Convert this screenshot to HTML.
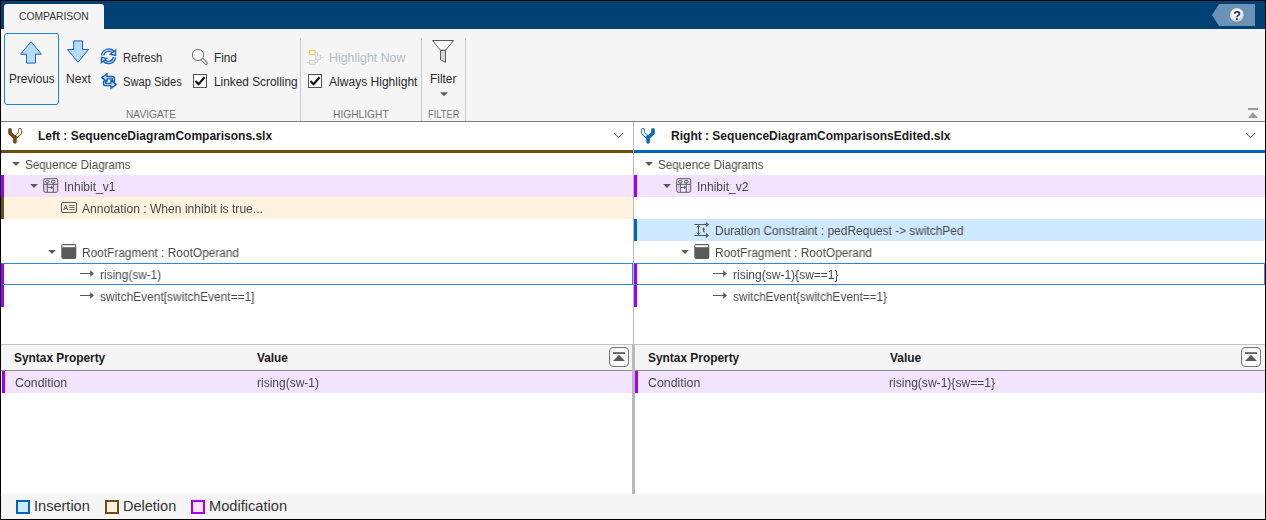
<!DOCTYPE html>
<html><head><meta charset="utf-8">
<style>
html,body{margin:0;padding:0}
body{width:1266px;height:520px;position:relative;overflow:hidden;background:#fff;font-family:"Liberation Sans",sans-serif}
.a{position:absolute}
.t{position:absolute;white-space:pre;transform-origin:0 0}
svg{position:absolute;overflow:visible}
</style></head><body>
<!-- blue title bar -->
<div class="a" style="left:0;top:0;width:1266px;height:29px;background:#004174"></div>
<!-- toolstrip body -->
<div class="a" style="left:0;top:29px;width:1266px;height:92px;background:#f5f5f5"></div>
<div class="a" style="left:0;top:121px;width:1266px;height:1px;background:#7d7d7d"></div>
<!-- tab -->
<div class="a" style="left:4px;top:4px;width:100px;height:26px;background:#f5f5f5;border-radius:3px 3px 0 0"></div>
<!-- help -->
<svg style="left:1212px;top:4px" width="44" height="23" viewBox="0 0 44 23">
 <defs><radialGradient id="hg" cx="0.4" cy="0.3" r="0.75"><stop offset="0" stop-color="#ffffff"/><stop offset="0.6" stop-color="#e9edf1"/><stop offset="1" stop-color="#aab4c0"/></radialGradient></defs>
 <polygon points="0,11 7,0 43,0 43,22 7,22" fill="#6a93b6"/>
 <circle cx="24.9" cy="11.1" r="7.3" fill="url(#hg)" stroke="#5b7894" stroke-width="0.6"/>
 <text x="25" y="15.5" font-family="Liberation Sans, sans-serif" font-weight="700" font-size="12.5" fill="#1d2b45" text-anchor="middle">?</text>
</svg>
<!-- Previous button -->
<div class="a" style="left:4px;top:33px;width:53px;height:70px;border:1px solid #2384dd;border-radius:3px;background:#f5f5f5"></div>
<svg style="left:0;top:0" width="1266" height="130" viewBox="0 0 1266 130">
 <!-- up arrow -->
 <polygon points="31,41.6 41.4,54.2 35.5,54.2 35.5,63.1 26.5,63.1 26.5,54.2 20.6,54.2" fill="#b5dbff" stroke="#1f66bd" stroke-width="1" stroke-linejoin="miter"/>
 <!-- down arrow -->
 <polygon points="73.7,40.9 82.5,40.9 82.5,49.5 88.5,49.5 78,62.3 67.5,49.5 73.7,49.5" fill="#b5dbff" stroke="#1f66bd" stroke-width="1"/>
 <!-- refresh icon -->
 <g fill="none" stroke-linecap="butt">
  <path d="M102.6,55.4 A6,6 0 0 1 113.4,52.6" stroke="#1960bb" stroke-width="3.5"/>
  <path d="M102.6,55.4 A6,6 0 0 1 113.4,52.6" stroke="#b5dbff" stroke-width="1.2"/>
  <path d="M114.4,57.2 A6,6 0 0 1 103.6,60" stroke="#1960bb" stroke-width="3.5"/>
  <path d="M114.4,57.2 A6,6 0 0 1 103.6,60" stroke="#b5dbff" stroke-width="1.2"/>
 </g>
 <polygon points="115.6,50 115.6,55.4 110.2,54.3" fill="#b5dbff" stroke="#1960bb" stroke-width="1.25"/>
 <polygon points="101.4,62.7 101.4,57.3 106.8,58.4" fill="#b5dbff" stroke="#1960bb" stroke-width="1.25"/>
 <!-- swap icon -->
 <path d="M101.7,77.6 L107,73.7 V76.5 H112.6 Q114.5,76.5 114.5,78.4 V81.2 H112.3 V78.9 H107 V81.6 Z" fill="#b5dbff" stroke="#175db6" stroke-width="1.35" stroke-linejoin="round"/>
 <path d="M116.3,84.4 L110.9,80.4 V83.3 H105.7 V81.1 H103.5 V83.7 Q103.5,85.6 105.4,85.6 H110.9 V88.4 Z" fill="#b5dbff" stroke="#175db6" stroke-width="1.35" stroke-linejoin="round"/>
 <!-- find icon -->
 <line x1="201.6" y1="58.8" x2="206.1" y2="63.3" stroke="#6e6e6e" stroke-width="3.4" stroke-linecap="round"/>
 <line x1="202.2" y1="59.4" x2="206" y2="63.2" stroke="#f4f4f4" stroke-width="1.5" stroke-linecap="round"/>
 <circle cx="198" cy="55" r="5.6" fill="#fbfbfb" stroke="#6e6e6e" stroke-width="1"/>
 <!-- checkboxes -->
 <rect x="193.5" y="74.5" width="13" height="13" fill="#fff" stroke="#555" stroke-width="1"/>
 <polyline points="195.4,81 198.6,84.3 204.6,77.2" fill="none" stroke="#111" stroke-width="2.1"/>
 <rect x="308.5" y="74.5" width="13" height="13" fill="#fff" stroke="#555" stroke-width="1"/>
 <polyline points="310.4,81 313.6,84.3 319.6,77.2" fill="none" stroke="#111" stroke-width="2.1"/>
 <!-- separators -->
 <rect x="300" y="38" width="1" height="83" fill="#c9c9c9"/>
 <rect x="421" y="38" width="1" height="83" fill="#c9c9c9"/>
 <rect x="465" y="38" width="1" height="83" fill="#c9c9c9"/>
 <!-- highlight now (disabled) -->
 <g fill="none" stroke="#d3d7d7" stroke-width="1">
  <path d="M307,52.5 H309 M315,52.5 H317.5 V62.5 H315 M307,62.5 H309 M317.5,57.5 H316 M321,57.5 H323"/>
  <rect x="315.5" y="55.5" width="5" height="4" fill="#e9ebeb"/>
  <rect x="309.5" y="60.5" width="5.5" height="4" fill="#e9ebeb"/>
 </g>
 <rect x="308.6" y="49.6" width="7.2" height="5.8" fill="#fbefc0" stroke="#fbefc0" stroke-width="1.2" opacity="0.7"/>
 <rect x="309.5" y="50.5" width="5.5" height="4" fill="#fdf5cf" stroke="#dfcc86" stroke-width="1"/>
 <!-- filter icon -->
 <polygon points="432.5,40.5 453.5,40.5 445.5,50.3 440.5,50.3" fill="#fbfbfb" stroke="#5a5a5a" stroke-width="1" stroke-linejoin="round"/>
 <polygon points="440.5,50.3 445.5,50.3 445.5,62.4 440.5,59.6" fill="#d9d9d9" stroke="#5a5a5a" stroke-width="1" stroke-linejoin="round"/>
 <polygon points="440.2,92.3 448,92.3 444.1,96.2" fill="#5a5a5a"/>
 <!-- collapse toolstrip icon -->
 <rect x="1248" y="108" width="10" height="2" fill="#9a9a9a"/>
 <polygon points="1248,118 1258,118 1253,112.2" fill="#9a9a9a"/>
</svg>

<!-- ===== panes ===== -->
<!-- left header underline / right header underline -->
<div class="a" style="left:1px;top:150px;width:632px;height:3px;background:#6b4e16"></div>
<div class="a" style="left:634px;top:150px;width:631px;height:3px;background:#0066b8"></div>
<!-- rows left -->
<div class="a" style="left:1px;top:175px;width:632px;height:22px;background:#f3e3ff"></div>
<div class="a" style="left:1px;top:197px;width:632px;height:22px;background:#fff3e0"></div>
<div class="a" style="left:1px;top:175px;width:3px;height:22px;background:#a200f2"></div>
<div class="a" style="left:1px;top:197px;width:3px;height:22px;background:#6b4e16"></div>
<div class="a" style="left:1px;top:263px;width:3px;height:44px;background:#a200f2"></div>
<div class="a" style="left:1px;top:263px;width:631px;height:20px;border:1px solid #2b88de;border-left:none"></div>
<!-- rows right -->
<div class="a" style="left:634px;top:175px;width:631px;height:22px;background:#f3e3ff"></div>
<div class="a" style="left:634px;top:219px;width:631px;height:22px;background:#cde8ff"></div>
<div class="a" style="left:634px;top:175px;width:3px;height:22px;background:#a200f2"></div>
<div class="a" style="left:634px;top:219px;width:3px;height:22px;background:#0066b8"></div>
<div class="a" style="left:634px;top:263px;width:3px;height:44px;background:#a200f2"></div>
<div class="a" style="left:634px;top:263px;width:630px;height:20px;border:1px solid #2b88de;border-left:none"></div>
<!-- bottom tables -->
<div class="a" style="left:1px;top:344px;width:1264px;height:27px;background:#f5f5f5"></div>
<div class="a" style="left:1px;top:344px;width:1264px;height:1px;background:#c4c4c4"></div>
<div class="a" style="left:1px;top:370px;width:1264px;height:1px;background:#8a8a8a"></div>
<div class="a" style="left:1px;top:371px;width:1264px;height:22px;background:#f3e3ff"></div>
<div class="a" style="left:2px;top:371px;width:3px;height:22px;background:#a200f2"></div>
<div class="a" style="left:635px;top:371px;width:3px;height:22px;background:#a200f2"></div>
<!-- dividers -->
<div class="a" style="left:633px;top:122px;width:1px;height:222px;background:#b9b9b9"></div>
<div class="a" style="left:632px;top:344px;width:3px;height:150px;background:#b9b9b9"></div>
<!-- legend bar -->
<div class="a" style="left:1px;top:494px;width:1264px;height:25px;background:#f5f5f5"></div>
<div class="a" style="left:16px;top:500px;width:10px;height:10px;border:2px solid #0066b8;background:#cde8ff"></div>
<div class="a" style="left:105px;top:500px;width:10px;height:10px;border:2px solid #6b4e16;background:#fff3e0"></div>
<div class="a" style="left:191px;top:500px;width:10px;height:10px;border:2px solid #a200f2;background:#f3e3ff"></div>

<svg style="left:0;top:0" width="1266" height="520" viewBox="0 0 1266 520">
 <!-- fork icons -->
 <g fill="none" stroke-linecap="round" stroke-linejoin="round">
  <path d="M20,129.8 V133.2 L15.4,137.4" stroke="#6b4e16" stroke-width="3.6"/>
  <path d="M20,129.9 V132.9 L17.2,135.5" stroke="#fff" stroke-width="2"/>
  <path d="M10,129.8 V133.2 L14.9,137.6 V142" stroke="#6b4e16" stroke-width="3.6"/>
 </g>
 <g fill="none" stroke-linecap="round" stroke-linejoin="round">
  <path d="M643,129.8 V133.2 L647.6,137.4" stroke="#0b68bd" stroke-width="3.6"/>
  <path d="M643,129.9 V132.9 L645.8,135.5" stroke="#fff" stroke-width="2"/>
  <path d="M653,129.8 V133.2 L648.1,137.6 V142" stroke="#0b68bd" stroke-width="3.6"/>
 </g>
 <!-- header chevrons -->
 <polyline points="614,133.2 618.5,137.6 623,133.2" fill="none" stroke="#5a5a5a" stroke-width="1"/>
 <polyline points="1246,133.2 1250.5,137.6 1255,133.2" fill="none" stroke="#5a5a5a" stroke-width="1"/>
 <!-- tree triangles -->
 <g fill="#5a5a5a">
  <polygon points="12.2,162.1 19.8,162.1 16,166"/>
  <polygon points="30.2,184.1 37.8,184.1 34,188"/>
  <polygon points="48.2,250.1 55.8,250.1 52,254"/>
  <polygon points="645.2,162.1 652.8,162.1 649,166"/>
  <polygon points="663.2,184.1 670.8,184.1 667,188"/>
  <polygon points="681.2,250.1 688.8,250.1 685,254"/>
 </g>
 <!-- sequence diagram icons -->
 <g id="seq" fill="none" stroke="#5a5a5a" stroke-width="1">
  <rect x="43.7" y="178.7" width="14" height="13.6" rx="1.6"/>
  <rect x="45.5" y="180.4" width="3.6" height="2.4" rx="1.1"/>
  <rect x="51.5" y="180.4" width="3.6" height="2.4" rx="1.1"/>
  <path d="M44,184.3 H57.5 M47.3,182.8 V192 M53.3,182.8 V192 M47.3,187.4 H52"/>
  <path d="M51.2,186 L53,187.4 L51.2,188.8 Z" fill="#5a5a5a" stroke-width="0.4"/>
  <path d="M45.3,185 V191.6 M55.8,185 V191.6" stroke="#5a5a5a" stroke-opacity="0.25"/>
 </g>
 <g transform="translate(633,0)" fill="none" stroke="#5a5a5a" stroke-width="1">
  <rect x="43.7" y="178.7" width="14" height="13.6" rx="1.6"/>
  <rect x="45.5" y="180.4" width="3.6" height="2.4" rx="1.1"/>
  <rect x="51.5" y="180.4" width="3.6" height="2.4" rx="1.1"/>
  <path d="M44,184.3 H57.5 M47.3,182.8 V192 M53.3,182.8 V192 M47.3,187.4 H52"/>
  <path d="M51.2,186 L53,187.4 L51.2,188.8 Z" fill="#5a5a5a" stroke-width="0.4"/>
  <path d="M45.3,185 V191.6 M55.8,185 V191.6" stroke="#5a5a5a" stroke-opacity="0.25"/>
 </g>
 <!-- annotation icon -->
 <g fill="none" stroke="#5a5a5a" stroke-width="1">
  <rect x="61.5" y="202.5" width="15" height="10" rx="1.5"/>
  <path d="M63.6,210 L65.7,204.9 L67.8,210 M64.4,208.4 H67" stroke-width="0.9"/>
  <path d="M69.4,205.5 H74.6 M69.4,207.5 H74.6 M69.4,209.5 H74.6" stroke-width="0.9"/>
 </g>
 <!-- root fragment icons -->
 <g id="rf">
  <rect x="61.3" y="244.1" width="15" height="14.8" rx="2" fill="#5a5a5a"/>
  <rect x="62.4" y="245.2" width="12.8" height="2" fill="#fff"/>
 </g>
 <g transform="translate(633,0)">
  <rect x="61.3" y="244.1" width="15" height="14.8" rx="2" fill="#5a5a5a"/>
  <rect x="62.4" y="245.2" width="12.8" height="2" fill="#fff"/>
 </g>
 <!-- message arrows -->
 <g id="ar" fill="none" stroke="#5a5a5a" stroke-width="1">
  <path d="M80,273.5 H91"/><path d="M90.2,270.3 L94,273.5 L90.2,276.7 Z" fill="#5a5a5a" stroke="none"/>
 </g>
 <g transform="translate(0,22)" fill="none" stroke="#5a5a5a" stroke-width="1">
  <path d="M80,273.5 H91"/><path d="M90.2,270.3 L94,273.5 L90.2,276.7 Z" fill="#5a5a5a" stroke="none"/>
 </g>
 <g transform="translate(633,0)" fill="none" stroke="#5a5a5a" stroke-width="1">
  <path d="M80,273.5 H91"/><path d="M90.2,270.3 L94,273.5 L90.2,276.7 Z" fill="#5a5a5a" stroke="none"/>
 </g>
 <g transform="translate(633,22)" fill="none" stroke="#5a5a5a" stroke-width="1">
  <path d="M80,273.5 H91"/><path d="M90.2,270.3 L94,273.5 L90.2,276.7 Z" fill="#5a5a5a" stroke="none"/>
 </g>
 <!-- duration constraint icon -->
 <g fill="none" stroke="#5a5a5a" stroke-width="1">
  <path d="M694.3,224.5 H708 M694.3,235.5 H708 M698.5,225.5 V234.5"/>
  <path d="M706,222.4 L708.8,224.5 L706,226.6 Z M706,233.4 L708.8,235.5 L706,237.6 Z" fill="#5a5a5a" stroke-width="0.6"/>
  <path d="M696.8,227.3 L698.5,225.4 L700.2,227.3 M696.8,232.7 L698.5,234.6 L700.2,232.7" stroke-width="0.9"/>
  <path d="M703.6,227.6 V231.2 Q703.6,232.1 704.8,231.8 M702.4,229.2 H705" stroke-width="1.1"/>
 </g>
 <!-- collapse buttons -->
 <g id="cb">
  <rect x="609.5" y="347.5" width="19" height="19" rx="3.5" fill="#f8f8f8" stroke="#777" stroke-width="1"/>
  <rect x="613" y="352.2" width="12" height="1.8" fill="#5a5a5a"/>
  <polygon points="613,360.9 625,360.9 619,354.7" fill="#5a5a5a"/>
 </g>
 <g transform="translate(632,0)">
  <rect x="609.5" y="347.5" width="19" height="19" rx="3.5" fill="#f8f8f8" stroke="#777" stroke-width="1"/>
  <rect x="613" y="352.2" width="12" height="1.8" fill="#5a5a5a"/>
  <polygon points="613,360.9 625,360.9 619,354.7" fill="#5a5a5a"/>
 </g>
</svg>

<span class="t" style="left:19.26px;top:10.38px;font-size:11.6px;line-height:11.6px;color:#333333;transform:scaleX(0.8896)">COMPARISON</span>
<span class="t" style="left:8.72px;top:73.34px;font-size:12px;line-height:12px;color:#2a2a2a;transform:scaleX(0.9768)">Previous</span>
<span class="t" style="left:65.69px;top:73.34px;font-size:12px;line-height:12px;color:#2a2a2a;transform:scaleX(1.0085)">Next</span>
<span class="t" style="left:122.76px;top:52.44px;font-size:12px;line-height:12px;color:#2a2a2a;transform:scaleX(0.9366)">Refresh</span>
<span class="t" style="left:122.84px;top:76.04px;font-size:12px;line-height:12px;color:#2a2a2a;transform:scaleX(0.9280)">Swap Sides</span>
<span class="t" style="left:214.02px;top:52.44px;font-size:12px;line-height:12px;color:#2a2a2a;transform:scaleX(0.9814)">Find</span>
<span class="t" style="left:214.01px;top:76.04px;font-size:12px;line-height:12px;color:#2a2a2a;transform:scaleX(0.9867)">Linked Scrolling</span>
<span class="t" style="left:329.47px;top:52.44px;font-size:12px;line-height:12px;color:#b4bcc4;transform:scaleX(1.0329)">Highlight Now</span>
<span class="t" style="left:329.00px;top:76.04px;font-size:12px;line-height:12px;color:#2a2a2a;transform:scaleX(1.0045)">Always Highlight</span>
<span class="t" style="left:429.81px;top:73.34px;font-size:12px;line-height:12px;color:#2a2a2a;transform:scaleX(0.9882)">Filter</span>
<span class="t" style="left:125.65px;top:109.46px;font-size:10.8px;line-height:10.8px;color:#757575;transform:scaleX(0.9456)">NAVIGATE</span>
<span class="t" style="left:333.05px;top:109.46px;font-size:10.8px;line-height:10.8px;color:#757575;transform:scaleX(0.9478)">HIGHLIGHT</span>
<span class="t" style="left:427.93px;top:109.46px;font-size:10.8px;line-height:10.8px;color:#757575;transform:scaleX(0.8691)">FILTER</span>
<span class="t" style="left:37.75px;top:129.84px;font-size:12px;line-height:12px;color:#1a1a1a;transform:scaleX(1.0002);font-weight:700">Left : SequenceDiagramComparisons.slx</span>
<span class="t" style="left:671.05px;top:129.84px;font-size:12px;line-height:12px;color:#1a1a1a;transform:scaleX(1.0000);font-weight:700">Right : SequenceDiagramComparisonsEdited.slx</span>
<span class="t" style="left:24.92px;top:158.84px;font-size:12px;line-height:12px;color:#484848;transform:scaleX(0.9698);will-change:transform">Sequence Diagrams</span>
<span class="t" style="left:63.61px;top:180.84px;font-size:12px;line-height:12px;color:#484848;transform:scaleX(0.9910);will-change:transform">Inhibit_v1</span>
<span class="t" style="left:81.70px;top:202.84px;font-size:12px;line-height:12px;color:#484848;transform:scaleX(1.0084);will-change:transform">Annotation : When inhibit is true...</span>
<span class="t" style="left:81.51px;top:246.84px;font-size:12px;line-height:12px;color:#484848;transform:scaleX(0.9892);will-change:transform">RootFragment : RootOperand</span>
<span class="t" style="left:99.96px;top:268.84px;font-size:12px;line-height:12px;color:#484848;transform:scaleX(0.9868);will-change:transform">rising(sw-1)</span>
<span class="t" style="left:100.20px;top:290.84px;font-size:12px;line-height:12px;color:#484848;transform:scaleX(0.9942);will-change:transform">switchEvent[switchEvent==1]</span>
<span class="t" style="left:657.92px;top:158.84px;font-size:12px;line-height:12px;color:#484848;transform:scaleX(0.9698);will-change:transform">Sequence Diagrams</span>
<span class="t" style="left:696.61px;top:180.84px;font-size:12px;line-height:12px;color:#484848;transform:scaleX(0.9910);will-change:transform">Inhibit_v2</span>
<span class="t" style="left:714.61px;top:224.84px;font-size:12px;line-height:12px;color:#484848;transform:scaleX(0.9926);will-change:transform">Duration Constraint : pedRequest -&gt; switchPed</span>
<span class="t" style="left:714.51px;top:246.84px;font-size:12px;line-height:12px;color:#484848;transform:scaleX(0.9892);will-change:transform">RootFragment : RootOperand</span>
<span class="t" style="left:732.65px;top:268.84px;font-size:12px;line-height:12px;color:#484848;transform:scaleX(1.0019);will-change:transform">rising(sw-1){sw==1}</span>
<span class="t" style="left:732.91px;top:290.84px;font-size:12px;line-height:12px;color:#484848;transform:scaleX(0.9827);will-change:transform">switchEvent{switchEvent==1}</span>
<span class="t" style="left:14.30px;top:351.84px;font-size:12px;line-height:12px;color:#1a1a1a;transform:scaleX(0.9913);font-weight:700">Syntax Property</span>
<span class="t" style="left:256.75px;top:351.84px;font-size:12px;line-height:12px;color:#1a1a1a;transform:scaleX(0.9854);font-weight:700">Value</span>
<span class="t" style="left:14.78px;top:377.34px;font-size:12px;line-height:12px;color:#484848;transform:scaleX(1.0303);will-change:transform">Condition</span>
<span class="t" style="left:256.55px;top:377.34px;font-size:12px;line-height:12px;color:#484848;transform:scaleX(0.9983);will-change:transform">rising(sw-1)</span>
<span class="t" style="left:647.50px;top:351.84px;font-size:12px;line-height:12px;color:#1a1a1a;transform:scaleX(0.9913);font-weight:700">Syntax Property</span>
<span class="t" style="left:889.55px;top:351.84px;font-size:12px;line-height:12px;color:#1a1a1a;transform:scaleX(0.9951);font-weight:700">Value</span>
<span class="t" style="left:648.08px;top:377.34px;font-size:12px;line-height:12px;color:#484848;transform:scaleX(1.0323);will-change:transform">Condition</span>
<span class="t" style="left:889.05px;top:377.34px;font-size:12px;line-height:12px;color:#484848;transform:scaleX(1.0057);will-change:transform">rising(sw-1){sw==1}</span>
<span class="t" style="left:34.38px;top:499.62px;font-size:13.8px;line-height:13.8px;color:#333333;transform:scaleX(1.0542)">Insertion</span>
<span class="t" style="left:123.19px;top:499.62px;font-size:13.8px;line-height:13.8px;color:#333333;transform:scaleX(1.0515)">Deletion</span>
<span class="t" style="left:209.27px;top:499.62px;font-size:13.8px;line-height:13.8px;color:#333333;transform:scaleX(1.0601)">Modification</span>

<!-- outer black frame -->
<div class="a" style="left:0;top:0;width:1264px;height:518px;border:1px solid #000;pointer-events:none"></div>
</body></html>
